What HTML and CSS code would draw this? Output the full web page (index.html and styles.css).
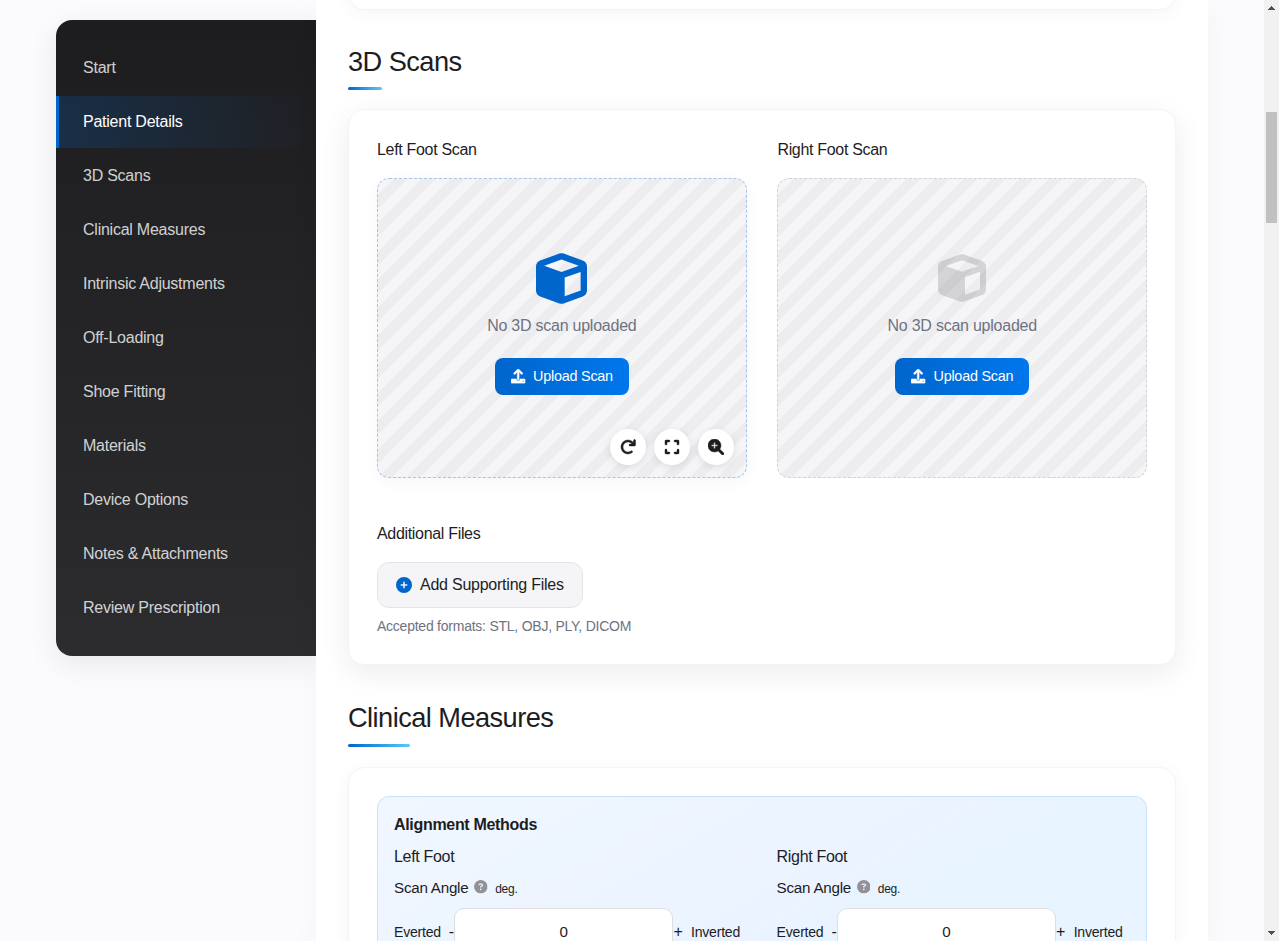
FILE: index.html
```html
<!DOCTYPE html>
<html lang="en">
<head>
<meta charset="utf-8">
<title>Prescription Form</title>
<link rel="stylesheet" href="styles.css">
</head>
<body>
<svg class="defs" aria-hidden="true">
  <symbol id="cube" viewBox="0 0 512 512"><path d="M234.5 5.7c13.9-5 29.1-5 43.1 0l192 68.6C495 83.4 512 107.5 512 134.6V377.400c0 27-17 51.200-42.500 60.300l-192 68.600c-13.900 5-29.100 5-43.100 0l-192-68.600C17 428.600 0 404.500 0 377.400V134.600c0-27 17-51.200 42.500-60.300l192-68.600zM256 66L82.300 128 256 190l173.700-62L256 66zm32 368.600l160-57.100v-188L288 246.600v188z"/></symbol>
  <symbol id="upload" viewBox="0 0 512 512"><path d="M105.4 182.600c12.500 12.500 32.800 12.500 45.300 0L224 109.300V352c0 17.700 14.300 32 32 32s32-14.300 32-32V109.300l73.400 73.300c12.500 12.500 32.800 12.500 45.300 0s12.500-32.800 0-45.300l-128-128c-12.500-12.500-32.800-12.500-45.300 0l-128 128c-12.500 12.500-12.500 32.800 0 45.300zM480 352H320c0 35.300-28.700 64-64 64s-64-28.700-64-64H32c-17.700 0-32 14.300-32 32v96c0 17.700 14.300 32 32 32h448c17.700 0 32-14.300 32-32v-96c0-17.700-14.300-32-32-32zM432 456a24 24 0 1 1 0-48 24 24 0 1 1 0 48z"/></symbol>
  <symbol id="rotate" viewBox="0 0 512 512"><path d="M496 48V192c0 17.700-14.300 32-32 32H320c-17.700 0-32-14.300-32-32s14.300-32 32-32h63.400c-30-39.700-77.300-63.800-127.600-63.800C167.700 96.200 96 167.900 96 256s71.700 159.800 159.800 159.800c34.900 0 68-11 95.900-31.900c14.200-10.500 34.200-7.800 44.800 6.400c10.600 14.200 7.800 34.200-6.400 44.800c-39 29.300-85.400 44.900-134.200 44.900C132.500 479.900 32 379.400 32 256s100.500-223.900 223.900-223.900c69.100 0 134 32.500 176.100 86.100V48c0-17.700 14.300-32 32-32s32 14.300 32 32z"/></symbol>
  <symbol id="expand" viewBox="0 0 448 512"><path d="M32 32C14.300 32 0 46.300 0 64v96c0 17.700 14.300 32 32 32s32-14.300 32-32V96h64c17.700 0 32-14.300 32-32s-14.300-32-32-32H32zM64 352c0-17.700-14.300-32-32-32s-32 14.300-32 32v96c0 17.700 14.300 32 32 32h96c17.700 0 32-14.300 32-32s-14.300-32-32-32H64V352zM320 32c-17.700 0-32 14.300-32 32s14.300 32 32 32h64v64c0 17.700 14.300 32 32 32s32-14.300 32-32V64c0-17.700-14.300-32-32-32H320zM448 352c0-17.700-14.300-32-32-32s-32 14.300-32 32v64H320c-17.700 0-32 14.300-32 32s14.300 32 32 32h96c17.700 0 32-14.300 32-32V352z"/></symbol>
  <symbol id="zoom-in" viewBox="0 0 512 512"><path d="M500.300 443.700L380.600 324c25-37 35.400-74 35.400-116C416 93.100 322.900 0 208 0S0 93.100 0 208s93.100 208 208 208c42 0 79-10.400 116-35.400l119.700 119.700c15.600 15.600 41 15.600 56.600 0s15.600-41 0-56.600zM288 232H232v56c0 13.300-10.700 24-24 24s-24-10.700-24-24V232H128c-13.300 0-24-10.700-24-24s10.700-24 24-24h56V128c0-13.300 10.700-24 24-24s24 10.700 24 24v56h56c13.300 0 24 10.700 24 24s-10.700 24-24 24z"/></symbol>
  <symbol id="plus" viewBox="0 0 512 512"><path d="M256 512A256 256 0 1 0 256 0a256 256 0 1 0 0 512zM232 344V280H168c-13.300 0-24-10.700-24-24s10.700-24 24-24h64V168c0-13.300 10.700-24 24-24s24 10.700 24 24v64h64c13.300 0 24 10.700 24 24s-10.700 24-24 24H280v64c0 13.300-10.700 24-24 24s-24-10.700-24-24z"/></symbol>
  <symbol id="help" viewBox="0 0 512 512"><path d="M256 512A256 256 0 1 0 256 0a256 256 0 1 0 0 512zM169.800 165.300c7.900-22.300 29.100-37.300 52.800-37.300h58.300c34.900 0 63.100 28.300 63.100 63.100c0 22.600-12.100 43.500-31.700 54.800L280 264.400c-.2 13-10.900 23.600-24 23.600c-13.300 0-24-10.700-24-24V250.500c0-8.600 4.600-16.500 12.100-20.800l44.300-25.400c4.700-2.700 7.600-7.700 7.600-13.100c0-8.400-6.800-15.100-15.100-15.100H222.600c-3.400 0-6.400 2.100-7.500 5.300l-.4 1.200c-4.400 12.500-18.200 19-30.600 14.600s-19-18.200-14.600-30.600l.4-1.200zM224 352a32 32 0 1 1 64 0 32 32 0 1 1-64 0z"/></symbol>
</svg>
<div class="window">
  <div class="app">
    <nav class="sidebar">
      <a class="nav-item">Start</a>
      <a class="nav-item active">Patient Details</a>
      <a class="nav-item">3D Scans</a>
      <a class="nav-item">Clinical Measures</a>
      <a class="nav-item">Intrinsic Adjustments</a>
      <a class="nav-item">Off-Loading</a>
      <a class="nav-item">Shoe Fitting</a>
      <a class="nav-item">Materials</a>
      <a class="nav-item">Device Options</a>
      <a class="nav-item">Notes &amp; Attachments</a>
      <a class="nav-item">Review Prescription</a>
    </nav>
    <main class="content">
      <section class="card card-previous"></section>
      <h2 class="section-title">3D Scans</h2>
      <section class="card scans raised">
        <div class="scan-grid">
          <div class="scan">
            <h3 class="label">Left Foot Scan</h3>
            <div class="dropzone hovered">
              <svg class="cube"><use href="#cube"/></svg>
              <p class="empty">No 3D scan uploaded</p>
              <button class="upload"><svg class="upload-icon"><use href="#upload"/></svg>Upload Scan</button>
              <div class="tools">
                <button class="tool"><svg class="tool-icon"><use href="#rotate"/></svg></button>
                <button class="tool"><svg class="tool-icon"><use href="#expand"/></svg></button>
                <button class="tool"><svg class="tool-icon"><use href="#zoom-in"/></svg></button>
              </div>
            </div>
          </div>
          <div class="scan">
            <h3 class="label">Right Foot Scan</h3>
            <div class="dropzone">
              <svg class="cube"><use href="#cube"/></svg>
              <p class="empty">No 3D scan uploaded</p>
              <button class="upload"><svg class="upload-icon"><use href="#upload"/></svg>Upload Scan</button>
            </div>
          </div>
        </div>
        <h3 class="label files-label">Additional Files</h3>
        <button class="add-files"><svg class="plus-icon"><use href="#plus"/></svg>Add Supporting Files</button>
        <p class="formats">Accepted formats: STL, OBJ, PLY, DICOM</p>
      </section>
      <h2 class="section-title following">Clinical Measures</h2>
      <section class="card measures">
        <div class="alignment">
          <h4 class="alignment-title">Alignment Methods</h4>
          <div class="feet">
            <div class="foot">
              <div class="foot-name">Left Foot</div>
              <div class="angle">Scan Angle<svg class="help-icon"><use href="#help"/></svg><span class="unit">deg.</span></div>
              <div class="stepper"><span class="side">Everted</span><span class="sign minus">-</span><input class="value" value="0"><span class="sign">+</span><span class="side">Inverted</span></div>
            </div>
            <div class="foot">
              <div class="foot-name">Right Foot</div>
              <div class="angle">Scan Angle<svg class="help-icon"><use href="#help"/></svg><span class="unit">deg.</span></div>
              <div class="stepper"><span class="side">Everted</span><span class="sign minus">-</span><input class="value" value="0"><span class="sign">+</span><span class="side">Inverted</span></div>
            </div>
          </div>
        </div>
      </section>
    </main>
  </div>
  <div class="scrollbar">
    <svg class="arrow" viewBox="0 0 7 4" shape-rendering="crispEdges"><path d="M3 0h1v1h1v1h1v1h1v1H0V3h1V2h1V1h1z"/></svg>
    <div class="thumb"></div>
    <svg class="arrow" viewBox="0 0 7 4" shape-rendering="crispEdges"><path d="M0 0h7v1H6v1H5v1H4v1H3V3H2V2H1V1H0z"/></svg>
  </div>
</div>
</body>
</html>
```
FILE: styles.css
```css
* { box-sizing: border-box; }
body {
  margin: 0;
  height: 941px;
  overflow: hidden;
  font: 16px/1.5 "Liberation Sans", Arial, sans-serif;
  letter-spacing: -0.24px;
  color: #1d1d1f;
  background: #fbfbfd;
}
h2, h3, h4, p { margin: 0; font-weight: 400; }
button, input { font: inherit; letter-spacing: inherit; color: inherit; }
svg { fill: currentColor; flex: none; }
.defs { display: none; }
.window { display: flex; height: 941px; }
.app { display: flex; flex: 1; padding: 0 56px; height: 941px; overflow: hidden; }

.sidebar {
  flex: none;
  width: 260px;
  height: 636px;
  margin-top: 20px;
  padding: 21px 0;
  border-radius: 16px 0 0 16px;
  background: linear-gradient(180deg, #1d1d1f, #2c2c2e);
  box-shadow: 0 8px 30px rgba(0, 0, 0, 0.08);
}
.nav-item {
  display: flex;
  align-items: center;
  height: 52px;
  margin: 1px 0 2px;
  padding-left: 24px;
  border-left: 3px solid transparent;
  color: rgba(255, 255, 255, 0.8);
}
.nav-item.active {
  color: #fff;
  border-left-color: #06c;
  background: linear-gradient(90deg, rgba(0, 102, 204, 0.22), transparent);
}

.content {
  position: relative;
  width: 892px;
  padding: 0 32px;
  background: #fff;
  box-shadow: 0 8px 30px rgba(0, 0, 0, 0.03);
}
.card {
  border: 1px solid #f4f4f5;
  border-radius: 16px;
  padding: 28px;
  background: #fff;
  box-shadow: 0 4px 20px rgba(0, 0, 0, 0.04);
}
.card-previous { height: 60px; margin-top: -50px; }
.raised { height: 556px; box-shadow: 0 8px 30px rgba(0, 0, 0, 0.08); }
.section-title {
  width: max-content;
  height: 49px;
  margin: 31px 0 19px;
  padding-top: 1px;
  font-size: 27.200px;
  line-height: 40px;
  letter-spacing: -0.544px;
}
.section-title::after {
  content: "";
  display: block;
  width: 30%;
  height: 3px;
  margin-top: 5px;
  border-radius: 2px;
  background: linear-gradient(90deg, #06c, #5ac8fa);
}
.following { height: 51px; margin: 32px 0 19px; }
.following::after { margin-top: 6px; }
.scan-grid { display: grid; grid-template-columns: 1fr 1fr; gap: 30.800px; }
.label { font-size: 16px; line-height: 24px; margin-bottom: 16px; letter-spacing: -0.32px; }
.dropzone {
  position: relative;
  display: flex;
  flex-direction: column;
  align-items: center;
  height: 300px;
  padding-top: 74px;
  border: 1px dashed #d2d2d7;
  border-radius: 12px;
  background: repeating-linear-gradient(-45deg, #f5f5f7, #f5f5f7 10px, #ededf0 10px, #ededf0 20px);
}
.dropzone.hovered { border-color: #a3c5ec; box-shadow: 0 4px 16px rgba(0, 0, 0, 0.04); }
.cube { width: 48px; height: 48px; margin: 1px 0; opacity: 0.15; }
.hovered .cube { color: #06c; opacity: 1; width: 51px; height: 51px; margin: -0.500px 0; }
.empty { margin: 11px 0 20px; color: #6e7380; }
.upload {
  display: flex;
  align-items: center;
  gap: 8px;
  height: 37px;
  padding: 0 16px;
  border: 0;
  border-radius: 8px;
  color: #fff;
  font-size: 14.400px;
  background: linear-gradient(90deg, #06c, #0077ed);
}
.upload-icon { width: 14.400px; height: 14.400px; stroke: currentColor; stroke-width: 16px; overflow: visible; }
.tools { position: absolute; right: 12px; bottom: 12px; display: flex; gap: 8px; }
.tool {
  display: grid;
  place-items: center;
  width: 36px;
  height: 36px;
  padding: 0;
  border: 0;
  border-radius: 50%;
  background: #fff;
  box-shadow: 0 2px 8px rgba(0, 0, 0, 0.1);
}
.tool-icon { width: 16px; height: 16px; stroke: currentColor; stroke-width: 14px; overflow: visible; }
.files-label { margin: 44px 0 16px; }
.add-files {
  display: flex;
  align-items: center;
  gap: 8px;
  height: 46px;
  padding: 0 18px;
  border: 1px solid #e5e5e8;
  border-radius: 12px;
  background: #f5f5f7;
}
.plus-icon { width: 16px; height: 16px; color: #06c; }
.formats { margin-top: 8px; font-size: 14px; line-height: 21px; color: #6e7380; }

.measures { height: 500px; }
.alignment {
  height: 440px;
  padding: 16px;
  border: 1px solid #c9e2fb;
  border-radius: 12px;
  background: linear-gradient(150deg, #f0f7ff, #ebf3ff 38%, #e8f4ff 46%);
}
.alignment-title { font-size: 16px; font-weight: 700; line-height: 24px; margin-bottom: 8px; letter-spacing: -0.32px; }
.feet { display: grid; grid-template-columns: 346px 346px; gap: 36.600px; }
.foot-name { line-height: 24px; letter-spacing: -0.32px; }
.angle { display: flex; align-items: center; height: 24px; margin: 7px 0 8px; font-size: 15.200px; }
.help-icon { width: 13.600px; height: 13.600px; margin: 0 7.400px 2px 5.700px; color: #919196; }
.unit { font-size: 12px; padding-top: 2px; }
.stepper { display: flex; align-items: center; width: 346px; height: 47px; font-size: 14.080px; }
.side { flex: none; padding-top: 2px; }
.sign { font-size: 16px; margin-right: 8.500px; }
.sign.minus { margin: 0 0 0 8px; }
.value {
  flex: 1;
  min-width: 0;
  height: 47px;
  padding: 0;
  border: 1px solid #dedee2;
  border-radius: 10px;
  background: #fff;
  font-size: 15.200px;
  text-align: center;
}

.scrollbar {
  display: flex;
  flex-direction: column;
  align-items: center;
  width: 15px;
  padding: 6px 0;
  background: #f1f1f1;
}
.arrow { width: 7px; height: 4px; color: #505050; }
.thumb { width: 11px; height: 111px; margin: 102px 0 auto; background: #c1c1c1; }
```
